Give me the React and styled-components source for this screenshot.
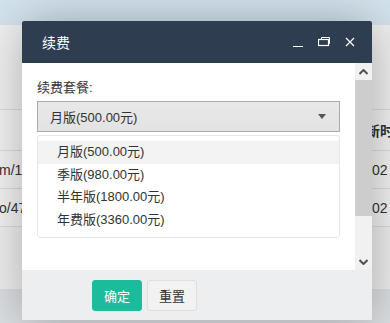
import React from 'react'
import styled, { createGlobalStyle } from 'styled-components'

const GlobalStyle = createGlobalStyle`
  html, body {
    margin: 0;
    padding: 0;
    background: #efefef;
    font-family: "Liberation Sans", "Noto Sans CJK SC", sans-serif;
    overflow: hidden;
  }
`

const Page = styled.div`
  position: relative;
  width: 390px;
  height: 323px;
  overflow: hidden;
  background: #efefef;
`

const TopBar = styled.div`
  height: 25px;
  background: #d4e4ee;
`

const Spacer = styled.div`
  height: 84px;
  background: #f1f1f1;
`

const Table = styled.div`
  border-top: 1px solid #dcdcdc;
  background: #f3f3f3;
`

const Row = styled.div`
  display: flex;
  justify-content: space-between;
  align-items: center;
  height: ${p => p.h}px;
  border-bottom: 1px solid #dcdcdc;
  font-size: 14px;
  color: #333;
  font-weight: ${p => (p.head ? 'bold' : 'normal')};
`

const LeftCell = styled.span`
  margin-left: -1px;
  white-space: nowrap;
`

const RightCell = styled.span`
  width: 38px;
  box-sizing: border-box;
  padding-left: ${p => (p.head ? 0 : 20)}px;
  white-space: nowrap;
  overflow: hidden;
  display: flex;
  align-items: center;
  gap: 2px;
`

const Dot = styled.i`
  display: inline-block;
  width: 4px;
  height: 8px;
  border-radius: 2px;
  background: #f0b54a;
`

const BottomBand = styled.div`
  margin-top: 62px;
  height: 40px;
  background: #dcdfe2;
`

const Layer = styled.div`
  position: absolute;
  left: 22px;
  top: 21px;
  width: 350px;
  height: 299px;
  display: flex;
  flex-direction: column;
  background: #fff;
  border-radius: 2px;
  box-shadow: 1px 1px 50px rgba(0, 0, 0, 0.3);
  overflow: hidden;
`

const Header = styled.div`
  height: 42px;
  flex: none;
  display: flex;
  align-items: center;
  justify-content: space-between;
  padding: 0 16px 0 20px;
  background: #2e3d4f;
  color: #fff;
  font-size: 14px;
`

const Tools = styled.div`
  display: flex;
  align-items: center;
  gap: 14px;
`

const ToolIcon = styled.svg`
  width: 12px;
  height: 12px;
  display: block;
`

const Body = styled.div`
  height: 207px;
  flex: none;
  display: flex;
`

const Content = styled.div`
  flex: 1;
  padding: 15px 15px 0;
`

const Label = styled.div`
  font-size: 13px;
  line-height: 20px;
  color: #333;
  margin-bottom: 3px;
`

const Select = styled.div`
  height: 29px;
  display: flex;
  align-items: center;
  justify-content: space-between;
  padding: 0 13px 0 12px;
  border: 1px solid #aaa;
  background: linear-gradient(#e8e8e8, #e3e3e3);
  font-size: 13px;
  color: #333;
`

const Caret = styled.i`
  width: 0;
  height: 0;
  border-left: 4px solid transparent;
  border-right: 4px solid transparent;
  border-top: 5px solid #555;
`

const Options = styled.ul`
  list-style: none;
  margin: 3px 0 0;
  padding: 5px 0 6px;
  border: 1px solid #e6e6e6;
  border-radius: 3px;
`

const Option = styled.li`
  height: 22.5px;
  line-height: 22.5px;
  padding-left: 19px;
  font-size: 13px;
  color: #333;
  background: ${p => (p.active ? '#f3f3f3' : 'transparent')};
`

const Scrollbar = styled.div`
  width: 17px;
  display: flex;
  flex-direction: column;
  background: #f1f1f1;
`

const ScrollBtn = styled.div`
  height: 17px;
  display: flex;
  align-items: center;
  justify-content: center;
`

const Thumb = styled.div`
  height: 136px;
  background: #cdcdcd;
`

const Track = styled.div`
  flex: 1;
`

const Footer = styled.div`
  flex: 1;
  display: flex;
  gap: 5px;
  padding: 10px 0 0 70px;
  background: #eceef0;
`

const Button = styled.button`
  width: 50px;
  height: 31px;
  padding: 0;
  border-radius: 3px;
  font-family: inherit;
  font-size: 13px;
  cursor: pointer;
  border: 1px solid ${p => (p.primary ? '#1bbc9b' : '#dedede')};
  background: ${p => (p.primary ? '#1bbc9b' : '#f2f2f2')};
  color: ${p => (p.primary ? '#fff' : '#333')};
`

const plans = ['月版(500.00元)', '季版(980.00元)', '半年版(1800.00元)', '年费版(3360.00元)']

export default function App() {
  return (
    <Page>
      <GlobalStyle />
      <TopBar />
      <Spacer />
      <Table>
        <Row h={40} head>
          <LeftCell />
          <RightCell head>更新时间</RightCell>
        </Row>
        <Row h={37}>
          <LeftCell>m/1.jpg</LeftCell>
          <RightCell>02<Dot /></RightCell>
        </Row>
        <Row h={37}>
          <LeftCell>o/47.jpg</LeftCell>
          <RightCell>02<Dot /></RightCell>
        </Row>
      </Table>
      <BottomBand />

      <Layer>
        <Header>
          <span>续费</span>
          <Tools>
            <ToolIcon viewBox="0 0 12 12">
              <path d="M1 10.5h10" stroke="#fff" strokeWidth="1" fill="none" />
            </ToolIcon>
            <ToolIcon viewBox="0 0 12 12">
              <path d="M3.5 3.5V1.5h8v6h-1.5" stroke="#fff" strokeWidth="1" fill="none" />
              <rect x="0.5" y="3.5" width="10" height="6" stroke="#fff" strokeWidth="1.2" fill="none" />
            </ToolIcon>
            <ToolIcon viewBox="0 0 12 12">
              <path d="M2 2l8 8M10 2l-8 8" stroke="#fff" strokeWidth="1.2" fill="none" />
            </ToolIcon>
          </Tools>
        </Header>

        <Body>
          <Content>
            <Label>续费套餐:</Label>
            <Select>
              <span>月版(500.00元)</span>
              <Caret />
            </Select>
            <Options>
              {plans.map((p, i) => (
                <Option key={p} active={i === 0}>{p}</Option>
              ))}
            </Options>
          </Content>
          <Scrollbar>
            <ScrollBtn>
              <svg width="9" height="6" viewBox="0 0 9 6">
                <path d="M0.5 5L4.5 1l4 4" stroke="#505050" strokeWidth="2" fill="none" />
              </svg>
            </ScrollBtn>
            <Thumb />
            <Track />
            <ScrollBtn>
              <svg width="9" height="6" viewBox="0 0 9 6">
                <path d="M0.5 1l4 4 4-4" stroke="#505050" strokeWidth="2" fill="none" />
              </svg>
            </ScrollBtn>
          </Scrollbar>
        </Body>

        <Footer>
          <Button primary>确定</Button>
          <Button>重置</Button>
        </Footer>
      </Layer>
    </Page>
  )
}
